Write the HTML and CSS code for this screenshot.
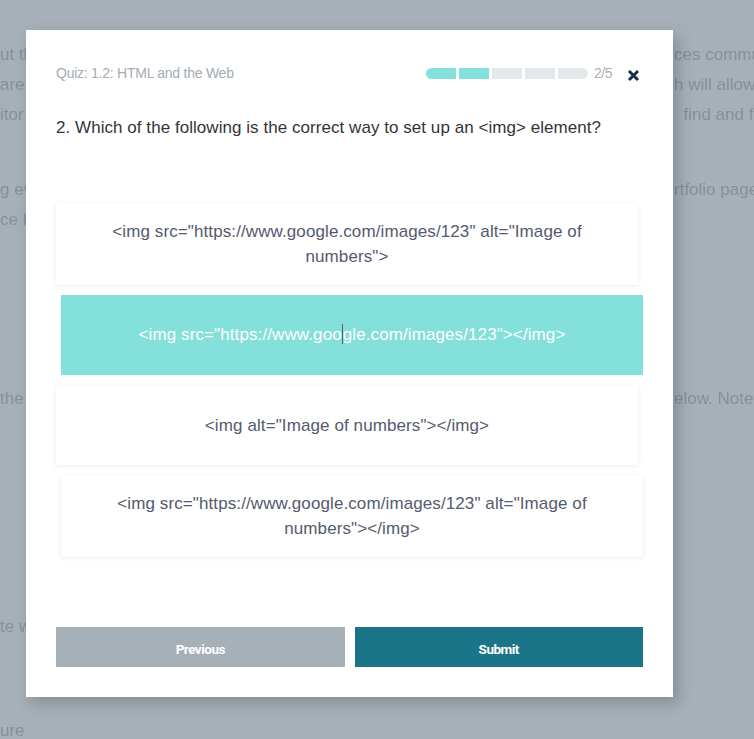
FILE: index.html
```html
<!DOCTYPE html>
<html lang="en">
<head>
<meta charset="utf-8">
<title>Quiz</title>
<link rel="stylesheet" href="styles.css">
</head>
<body>
<div class="bg-page">
  <div class="bg-group g1">
    <div class="bg-line"><span class="bl">ut the</span><span class="br">ces communicate</span></div>
    <div class="bg-line"><span class="bl">are a</span><span class="br">h will allow you</span></div>
    <div class="bg-line"><span class="bl">itor</span><span class="br">&nbsp;&nbsp;find and fix</span></div>
  </div>
  <div class="bg-group g2">
    <div class="bg-line"><span class="bl">g ev</span><span class="br">rtfolio page</span></div>
    <div class="bg-line"><span class="bl">ce b</span><span class="br"></span></div>
  </div>
  <div class="bg-group g3">
    <div class="bg-line"><span class="bl">the</span><span class="br">elow. Note that</span></div>
  </div>
  <div class="bg-group g4">
    <div class="bg-line"><span class="bl">te w</span><span class="br"></span></div>
  </div>
  <div class="bg-group g5">
    <div class="bg-line"><span class="bl">ure</span><span class="br"></span></div>
  </div>
</div>

<div class="modal">
  <div class="modal-header">
    <div class="quiz-title">Quiz: 1.2: HTML and the Web</div>
    <div class="header-right">
      <div class="progress">
        <span class="seg done"></span><span class="seg done"></span><span class="seg"></span><span class="seg"></span><span class="seg"></span>
      </div>
      <span class="count">2/5</span>
      <svg class="close" width="13" height="13" viewBox="0 0 13 13"><path d="M2 2 L11 11 M11 2 L2 11" stroke="#1b2d4b" stroke-width="3" stroke-linecap="butt"/></svg>
    </div>
  </div>
  <div class="question">2. Which of the following is the correct way to set up an &lt;img&gt; element?</div>
  <div class="options">
    <div class="option">&lt;img src="https://www.google.com/images/123" alt="Image of numbers"&gt;</div>
    <div class="option alt selected">&lt;img src="https://www.goo<span class="caret"></span>gle.com/images/123"&gt;&lt;/img&gt;</div>
    <div class="option">&lt;img alt="Image of numbers"&gt;&lt;/img&gt;</div>
    <div class="option alt">&lt;img src="https://www.google.com/images/123" alt="Image of numbers"&gt;&lt;/img&gt;</div>
  </div>
  <div class="actions">
    <button class="btn prev">Previous</button>
    <button class="btn submit">Submit</button>
  </div>
</div>
</body>
</html>
```

FILE: styles.css
```css
html, body {
  margin: 0;
  padding: 0;
}
body {
  width: 754px;
  height: 739px;
  overflow: hidden;
  background: #a7b0b8;
  position: relative;
  font-family: "Liberation Sans", Arial, sans-serif;
}

/* blurred page behind the overlay */
.bg-page {
  filter: blur(0.7px);
  color: #86909a;
  font-size: 17px;
}
.bg-group.g1 { padding-top: 40px; }
.bg-group.g2 { margin-top: 45px; }
.bg-group.g3 { margin-top: 149px; }
.bg-group.g4 { margin-top: 198px; }
.bg-group.g5 { margin-top: 74px; }
.bg-line {
  height: 30px;
  line-height: 30px;
  display: flex;
  white-space: nowrap;
  overflow: hidden;
}
.bl {
  width: 674px;
  flex: none;
}
.br {
  flex: none;
}

/* modal */
.modal {
  position: absolute;
  left: 26px;
  top: 30px;
  width: 647px;
  height: 667px;
  box-sizing: border-box;
  background: #ffffff;
  padding: 34px 30px 30px;
  box-shadow: 5px 6px 14px rgba(40, 50, 60, 0.28);
  display: flex;
  flex-direction: column;
}
.modal-header {
  display: flex;
  align-items: center;
  justify-content: space-between;
  height: 18px;
}
.quiz-title {
  font-size: 14px;
  color: #a3abb3;
  letter-spacing: -0.25px;
}
.header-right {
  display: flex;
  align-items: center;
  margin-right: 3px;
}
.progress {
  display: flex;
  gap: 3px;
}
.seg {
  width: 30px;
  height: 11px;
  background: #e5e8eb;
}
.seg.done {
  background: #84e0da;
}
.seg:first-child {
  border-radius: 6px 0 0 6px;
}
.seg:last-child {
  border-radius: 0 6px 6px 0;
}
.count {
  margin-left: 6px;
  font-size: 14px;
  color: #a8b0b8;
  letter-spacing: -0.5px;
}
.close {
  margin-left: 15px;
  margin-top: 5px;
}

.question {
  margin-top: 35px;
  font-size: 17px;
  line-height: 22px;
  letter-spacing: 0.05px;
  color: #333538;
}

.options {
  margin-top: 64px;
  display: flex;
  flex-direction: column;
  gap: 10px;
}
.option {
  width: 582px;
  min-height: 80px;
  box-sizing: border-box;
  padding: 16px 40px;
  display: flex;
  align-items: center;
  justify-content: center;
  text-align: center;
  font-size: 17px;
  letter-spacing: 0.1px;
  line-height: 25px;
  color: #555a70;
  background: #ffffff;
  box-shadow: 0 1px 5px rgba(0, 0, 0, 0.08);
}
.option.alt {
  align-self: flex-end;
}
.option.selected {
  background: #84e0da;
  color: #ffffff;
  box-shadow: none;
  display: block;
  line-height: 80px;
  padding: 0 40px;
}
.caret {
  display: inline-block;
  width: 1px;
  height: 20px;
  background: #555a70;
  vertical-align: -4px;
}

.actions {
  margin-top: auto;
  display: flex;
  gap: 10px;
}
.btn {
  flex: 1;
  height: 40px;
  border: 0;
  border-radius: 0;
  font-family: Roboto, "Liberation Sans", sans-serif;
  font-weight: 700;
  font-size: 13.5px;
  letter-spacing: -0.5px;
  color: #ffffff;
  padding: 3px 0 0;
}
.btn.prev {
  background: #a6b0b9;
}
.btn.submit {
  background: #1c7488;
}
```
